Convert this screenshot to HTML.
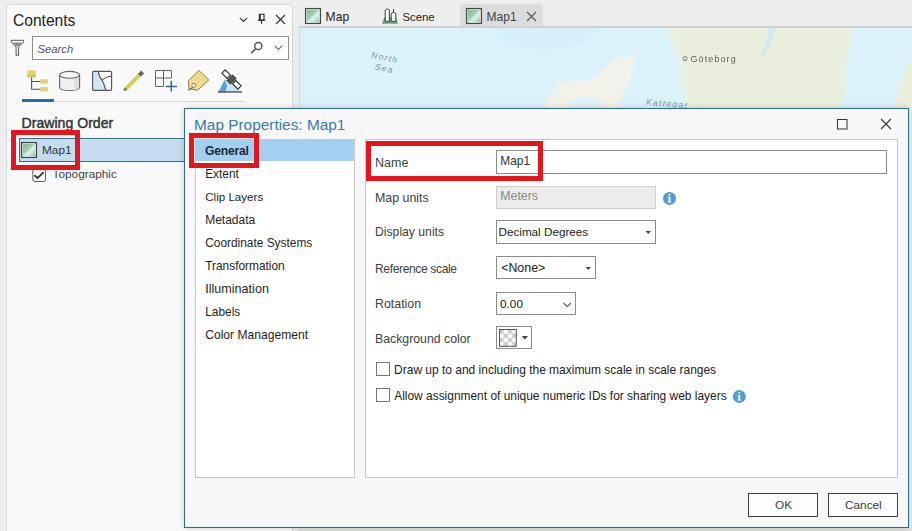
<!DOCTYPE html>
<html><head><meta charset='utf-8'><style>
*{margin:0;padding:0;box-sizing:border-box}
html,body{width:912px;height:531px;overflow:hidden;background:#eeeeee;font-family:"Liberation Sans",sans-serif;position:relative}
.t{position:absolute;white-space:pre;line-height:20px}
.r{position:absolute}
svg{position:absolute;overflow:visible}
</style></head><body>
<svg style="left:0;top:0" width="912" height="531" viewBox="0 0 912 531"><defs><clipPath id="mc"><rect x="299" y="28" width="613" height="503"/></clipPath><filter id="bl" x="-5%" y="-5%" width="110%" height="110%"><feGaussianBlur stdDeviation="0.8"/></filter></defs><g clip-path="url(#mc)"><rect x="299" y="28" width="613" height="503" fill="#dcf2fb"/><ellipse cx="545" cy="24" rx="53" ry="26" fill="#d5f0fc"/><path d="M640 50 L632 56 L614 58 L604 70 L592 79.5 L575 81 L560 82 L550 95 L544 108 L542 531 L620 531 L620 108 L622 93 L631 80 L633 61 Z" fill="#f2f2ea" filter="url(#bl)"/><path d="M572 98 Q585 94 600 99 L604 108 L570 108 Z" fill="#e2f2f6"/><path d="M666 28 L672 45 L678 60 L678 75 L682 90 L686 108 L687 531 L700 531 L695 108 L692 90 L690 60 L686 45 L680 28 Z" fill="#e6f1ea" filter="url(#bl)"/><path d="M672 28 L677 45 L683 60 L683 75 L687 90 L690 108 L690 531 L838 531 L840 108 L844 90 L846 60 L854 28 Z" fill="#eaefdd" filter="url(#bl)"/><path d="M770 28 L777 28 L770 43 L764 57 L761 57 Z" fill="#cfe9f5"/><path d="M912 58 L903 75 L897 95 L895 108 L900 112 L912 112 Z" fill="#eaefdd"/><rect x="299" y="527" width="613" height="4" fill="#e2e6de"/><g fill="#7a95a2" font-family="Liberation Sans" font-size="8.6" font-style="italic" letter-spacing="1.3"><text x="371" y="60.5" transform="rotate(12 385 58)">North</text><text x="375" y="71.5" transform="rotate(12 385 68)">Sea</text><text x="646" y="106" transform="rotate(5 660 103)">Kattegat</text></g><circle cx="685" cy="58.6" r="2" fill="none" stroke="#666" stroke-width="0.9"/><text x="690.5" y="62.2" font-family="Liberation Sans" font-size="9" fill="#3a3a3a" letter-spacing="1.1" opacity="0.8">Göteborg</text></g></svg>
<div class="r" style="left:299px;top:26px;width:613px;height:2px;background:#cfcfcf"></div>
<div class="r" style="left:293px;top:26px;width:7px;height:505px;background:#ebebeb;border-right:1px solid #d9d9d9"></div>
<div class="r" style="left:460px;top:4px;width:83px;height:22px;background:#dcdcdc;border-radius:4px 4px 0 0"></div>
<svg style="left:0;top:0" width="912" height="531" viewBox="0 0 912 531"><defs><linearGradient id="mg" x1="0" y1="0" x2="1" y2="1"><stop offset="0" stop-color="#86b48c"/><stop offset="0.45" stop-color="#a9cfae"/><stop offset="0.55" stop-color="#d6f2ee"/><stop offset="0.75" stop-color="#c8e6d6"/><stop offset="1" stop-color="#8cba92"/></linearGradient></defs><rect x="305.6" y="8.6" width="14.8" height="14.8" fill="#fff" stroke="#3d4a42" stroke-width="1.3"/><rect x="307" y="10" width="12" height="12" fill="url(#mg)"/><rect x="466.6" y="8.6" width="14.8" height="14.8" fill="#fff" stroke="#3d4a42" stroke-width="1.3"/><rect x="468" y="10" width="12" height="12" fill="url(#mg)"/><path d="M382 23.7 L384.4 17 L396 17 L398 23.7 Z" fill="#6f9c7c"/><path d="M385.2 21.4 V10 Q387.3 7.6 389.4 10 V21.4 Z" fill="#f4fbf6" stroke="#444" stroke-width="1"/><path d="M391.2 21.4 V13.5 Q393.5 11 395.8 13.5 V21.4 Z" fill="#f4fbf6" stroke="#444" stroke-width="1"/><path d="M393.5 9 V13" stroke="#444" stroke-width="1"/><path d="M527 12 L536 21 M536 12 L527 21" stroke="#555" stroke-width="1.1"/></svg>
<div class="t" style="left:325.60px;top:7.21px;font-size:12.1px;color:#222;">Map</div>
<div class="t" style="left:402.40px;top:7.45px;font-size:11.4px;color:#222;">Scene</div>
<div class="t" style="left:486.60px;top:7.24px;font-size:12.0px;color:#444;">Map1</div>
<div class="r" style="left:6px;top:4px;width:287px;height:556px;background:#f9f9f9;border:1px solid #d6d6d6;border-radius:4px 4px 0 0"></div>
<div class="t" style="left:13.00px;top:10.59px;font-size:15.6px;color:#222;">Contents</div>
<div class="r" style="left:32px;top:36px;width:257px;height:24px;background:#fff;border:1px solid #8e8e8e"></div>
<div class="t" style="left:37.40px;top:38.68px;font-size:11.3px;color:#555;font-style:italic;">Search</div>
<div class="r" style="left:22px;top:99px;width:32px;height:3px;background:#1e6fa8"></div>
<div class="r" style="left:54px;top:101px;width:191px;height:1px;background:#d4d4d4"></div>
<svg style="left:0;top:0" width="912" height="531" viewBox="0 0 912 531"><path d="M239.8 17.8 L243.5 21.5 L247.2 17.8" fill="none" stroke="#333" stroke-width="1.1"/><path d="M259.7 14.3 H264 V20 H259.7 Z" fill="#fff" stroke="#222" stroke-width="1.1"/><path d="M259.7 14.3 V20" stroke="#222" stroke-width="1.8"/><path d="M257.8 20.2 H265.3 M261.5 20 V23.8" stroke="#222" stroke-width="1.1"/><path d="M276 15 L285 24 M285 15 L276 24" stroke="#333" stroke-width="1.2"/><path d="M11.3 40.3 H23.6 V42.2 L18.6 46.8 V55.3 H16.1 V46.8 L11.3 42.2 Z" fill="#fff" stroke="#555" stroke-width="1"/><path d="M12.5 42.6 H22.4 L18.2 46.4 H16.6 Z" fill="#8a8a8a"/><circle cx="258.3" cy="46" r="3.6" fill="none" stroke="#555" stroke-width="1.5"/><path d="M255.5 48.9 L251.6 52.8" stroke="#555" stroke-width="1.6" stroke-linecap="round"/><path d="M274.8 45.9 L278.5 49.4 L282 45.9" fill="none" stroke="#666" stroke-width="1.1"/><path d="M31.6 77 V89.3 H40.5 M31.6 81.5 H40.5" fill="none" stroke="#555" stroke-width="1.1"/><rect x="27.3" y="70.3" width="8.5" height="7.2" fill="#e2d468"/><rect x="27.3" y="75.6" width="8.5" height="1.2" fill="#c9b84a"/><rect x="40.4" y="79.2" width="7.6" height="4.4" fill="#e2d468"/><rect x="40.4" y="87" width="7.6" height="4.6" fill="#e2d468"/><path d="M59.6 74.8 V87.6 A10.1 3.4 0 0 0 79.6 87.6 V74.8" fill="#f0f0f0" stroke="#666" stroke-width="1.1"/><path d="M74 78 V90.6 Q78 89.8 79 87.6 V76 Z" fill="#dedede"/><ellipse cx="69.6" cy="74.8" rx="10" ry="3.4" fill="#f6f6f6" stroke="#666" stroke-width="1.1"/><rect x="92.6" y="71.4" width="19" height="19" rx="1.5" fill="#fafafa"/><path d="M93 72 H98.2 Q99 77 102.1 80.1 Q104.5 85 105.8 90.3 H93 Z" fill="#d3e6f6"/><path d="M98.2 71.4 Q99 77 102.1 80.1 Q104.5 85 105.8 90.6 M102.1 80.1 Q106 76.5 111.6 76.2" fill="none" stroke="#555" stroke-width="1.1"/><rect x="92.6" y="71.4" width="19" height="19" rx="1.2" fill="none" stroke="#555" stroke-width="1.15"/><path d="M125.3 89.3 L140.6 74" stroke="#d4cc62" stroke-width="3.9"/><path d="M139.4 75.2 L142.6 72" stroke="#6a6252" stroke-width="3.9"/><path d="M124.2 90.4 L126 88.6" stroke="#666" stroke-width="2.2"/><path d="M155.5 70.5 H171.5 V78 H155.5 Z M163.5 70.5 V86.5 H155.5 V78" fill="none" stroke="#666" stroke-width="1"/><path d="M165.8 86.4 H177 M171.3 80.8 V91.6" stroke="#2f6888" stroke-width="1.5"/><path d="M199 70.5 L208.8 80 L197.6 90.2 L189 88.6 L188.4 80.8 Z" fill="#f2de8e" stroke="#8a7a44" stroke-width="1"/><path d="M195 78 L202.5 85 M197 76 L204.5 83 M199 74 L206 81" stroke="#e4cc70" stroke-width="0.9"/><circle cx="193.8" cy="85.3" r="2" fill="#fff" stroke="#8a7a44" stroke-width="1"/><path d="M192.5 87 Q191 90.5 187.8 90" fill="none" stroke="#6a5e3a" stroke-width="1"/><path d="M218.3 92 L224.7 79 L233 82 L241.8 92 Z" fill="#c4e6f5"/><path d="M218.6 92 L224.7 79.5 L227 86 L225.5 92 Z" fill="#5aa3d0"/><path d="M217.8 92 H242" stroke="#444" stroke-width="1.3"/><g transform="rotate(45 231.5 79.5)"><rect x="220.2" y="77.2" width="7.4" height="4.6" fill="#fff" stroke="#333" stroke-width="1.1"/><rect x="228.9" y="75.4" width="5.2" height="8.2" fill="#555" stroke="#333" stroke-width="0.8"/><rect x="235.4" y="77.2" width="7.4" height="4.6" fill="#fff" stroke="#333" stroke-width="1.1"/></g></svg>
<div class="t" style="left:21.60px;top:112.91px;font-size:14.1px;color:#333;-webkit-text-stroke:0.45px #333;">Drawing Order</div>
<div class="r" style="left:19px;top:138px;width:273px;height:24px;background:#c5dcef;border:1px solid #366c84;box-shadow:inset 0 1px 0 #b9e2fa,inset 0 -1px 0 #b9e2fa"></div>
<svg style="left:0;top:0" width="912" height="531" viewBox="0 0 912 531"><rect x="21.6" y="142.6" width="14.8" height="14.8" fill="#fff" stroke="#3d4a42" stroke-width="1.3"/><rect x="23" y="144" width="12" height="12" fill="url(#mg)"/><rect x="32.8" y="169.5" width="12.6" height="12" rx="2" fill="#fff" stroke="#555" stroke-width="1"/><path d="M34.4 175.2 L37.6 178 L43.5 172.3" fill="none" stroke="#333" stroke-width="1.8"/></svg>
<div class="t" style="left:42.00px;top:139.91px;font-size:11.8px;color:#333;">Map1</div>
<div class="t" style="left:52.60px;top:163.71px;font-size:11.8px;color:#444;">Topographic</div>
<div class="r" style="left:52px;top:168px;width:9px;height:3.1999999999999886px;background:#f9f9f9"></div>
<div class="r" style="left:11px;top:130px;width:69px;height:39.5px;border:5px solid #e3161e"></div>
<div class="r" style="left:184px;top:108px;width:725px;height:420px;background:#f7f7f7;border:1px solid #336c80;box-shadow:0 0 6px rgba(40,50,60,0.22),inset 0 0 0 1px #e4f8fc"></div>
<div class="t" style="left:194.00px;top:114.66px;font-size:15.4px;color:#387db0;">Map Properties: Map1</div>
<svg style="left:0;top:0" width="912" height="531" viewBox="0 0 912 531"><rect x="837.5" y="119.5" width="9.5" height="9.5" fill="none" stroke="#333" stroke-width="1"/><path d="M881 119 L891 129 M891 119 L881 129" stroke="#333" stroke-width="1.1"/></svg>
<div class="r" style="left:195px;top:139px;width:160px;height:339px;background:#fff;border:1px solid #c6c6c6"></div>
<div class="r" style="left:196px;top:140px;width:158px;height:21px;background:#a3d0f0"></div>
<div class="t" style="left:205.00px;top:140.77px;font-size:12.2px;color:#1c2a3a;font-weight:700;letter-spacing:-0.25px;">General</div>
<div class="t" style="left:205.20px;top:163.98px;font-size:11.9px;color:#1e1e1e;">Extent</div>
<div class="t" style="left:205.20px;top:187.08px;font-size:11.6px;color:#1e1e1e;">Clip Layers</div>
<div class="t" style="left:205.20px;top:209.94px;font-size:12.0px;color:#1e1e1e;">Metadata</div>
<div class="t" style="left:205.20px;top:232.98px;font-size:11.9px;color:#1e1e1e;">Coordinate Systems</div>
<div class="t" style="left:205.20px;top:255.98px;font-size:11.9px;color:#1e1e1e;">Transformation</div>
<div class="t" style="left:205.20px;top:278.73px;font-size:12.6px;color:#1e1e1e;">Illumination</div>
<div class="t" style="left:205.20px;top:301.98px;font-size:11.9px;color:#1e1e1e;">Labels</div>
<div class="t" style="left:205.20px;top:324.91px;font-size:12.1px;color:#1e1e1e;">Color Management</div>
<div class="r" style="left:189px;top:133px;width:70px;height:34.5px;border:5px solid #e3161e"></div>
<div class="r" style="left:365px;top:139px;width:533px;height:339px;background:#fff;border:1px solid #c9c9c9"></div>
<div class="t" style="left:375.00px;top:152.67px;font-size:12.5px;color:#3e3e3e;">Name</div>
<div class="t" style="left:375.00px;top:187.50px;font-size:12.4px;color:#3e3e3e;">Map units</div>
<div class="t" style="left:375.00px;top:222.47px;font-size:12.2px;color:#3e3e3e;">Display units</div>
<div class="t" style="left:375.00px;top:258.61px;font-size:12.1px;color:#3e3e3e;letter-spacing:-0.38px;">Reference scale</div>
<div class="t" style="left:375.00px;top:294.20px;font-size:12.4px;color:#3e3e3e;">Rotation</div>
<div class="t" style="left:375.00px;top:328.54px;font-size:12.3px;color:#3e3e3e;">Background color</div>
<div class="r" style="left:496px;top:150px;width:391px;height:24px;background:#fff;border:1px solid #8c8c8c"></div>
<div class="t" style="left:500.30px;top:150.78px;font-size:11.9px;color:#333;">Map1</div>
<div class="r" style="left:496px;top:186px;width:160px;height:23px;background:#ececec;border:1px solid #cfcfcf"></div>
<div class="t" style="left:500.20px;top:186.00px;font-size:12.4px;color:#8a8a8a;">Meters</div>
<div class="r" style="left:496px;top:220px;width:160px;height:24px;background:#fff;border:1px solid #8c8c8c"></div>
<div class="t" style="left:498.50px;top:221.55px;font-size:11.7px;color:#222;">Decimal Degrees</div>
<div class="r" style="left:496px;top:256px;width:100px;height:23px;background:#fff;border:1px solid #8c8c8c"></div>
<div class="t" style="left:501.20px;top:257.70px;font-size:12.4px;color:#222;">&lt;None&gt;</div>
<div class="r" style="left:496px;top:292px;width:80px;height:23px;background:#fff;border:1px solid #8c8c8c"></div>
<div class="t" style="left:500.00px;top:294.21px;font-size:11.8px;color:#222;">0.00</div>
<div class="r" style="left:496px;top:326px;width:36px;height:23px;background:#fff;border:1px solid #8c8c8c"></div>
<div class="r" style="left:376px;top:362px;width:14px;height:14px;background:#fff;border:1px solid #777"></div>
<div class="r" style="left:376px;top:388px;width:14px;height:14px;background:#fff;border:1px solid #777"></div>
<div class="t" style="left:394.10px;top:360.05px;font-size:11.98px;color:#222;">Draw up to and including the maximum scale in scale ranges</div>
<div class="t" style="left:394.20px;top:386.16px;font-size:11.95px;color:#222;">Allow assignment of unique numeric IDs for sharing web layers</div>
<svg style="left:0;top:0" width="912" height="531" viewBox="0 0 912 531"><circle cx="669.5" cy="198.4" r="6.5" fill="#529dd2"/><path d="M667.7 196.8 H670.4 V201.6 H671.4 V202.5 H667.6 V201.6 H668.6 V197.6 H667.7 Z" fill="#fff"/><circle cx="669.5" cy="194.70000000000002" r="1.05" fill="#fff"/><circle cx="739.3" cy="396.5" r="6.5" fill="#529dd2"/><path d="M737.5 394.9 H740.1999999999999 V399.7 H741.1999999999999 V400.6 H737.4 V399.7 H738.4 V395.7 H737.5 Z" fill="#fff"/><circle cx="739.3" cy="392.8" r="1.05" fill="#fff"/><path d="M645.5 231 L651 231 L648.25 234 Z" fill="#444"/><path d="M585.5 267 L591 267 L588.25 270 Z" fill="#444"/><path d="M563.5 303 L567.2 306.6 L570.9 303" fill="none" stroke="#555" stroke-width="1.1"/><path d="M521.7 336 L528 336 L524.85 339.6 Z" fill="#444"/><defs><pattern id="ck" x="499.5" y="329.5" width="8.4" height="8.4" patternUnits="userSpaceOnUse"><rect width="8.4" height="8.4" fill="#fdfdfd"/><rect width="4.2" height="4.2" fill="#cacaca"/><rect x="4.2" y="4.2" width="4.2" height="4.2" fill="#cacaca"/></pattern></defs><rect x="499.5" y="329.5" width="16.8" height="16.8" fill="url(#ck)" stroke="#555" stroke-width="1"/></svg>
<div class="r" style="left:366px;top:141px;width:177px;height:40px;border:5px solid #e3161e"></div>
<div class="r" style="left:748px;top:493px;width:70px;height:24px;background:#fdfdfd;border:1px solid #3c3c3c"></div>
<div class="r" style="left:828px;top:493px;width:70px;height:24px;background:#fdfdfd;border:1px solid #3c3c3c"></div>
<div class="t" style="left:775.00px;top:494.71px;font-size:11.8px;color:#3c3c3c;">OK</div>
<div class="t" style="left:845.00px;top:494.71px;font-size:11.8px;color:#3c3c3c;">Cancel</div>
</body></html>
